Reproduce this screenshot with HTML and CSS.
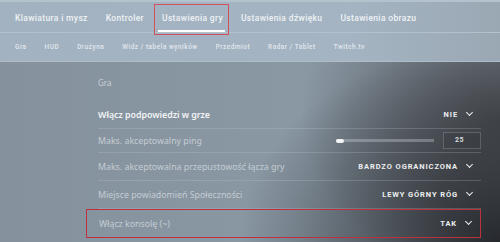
FILE: index.html
```html
<!DOCTYPE html>
<html lang="pl">
<head>
  <meta charset="UTF-8" />
  <title>Ustawienia gry</title>
  <link rel="stylesheet" href="styles.css">
</head>
<body>

  <!-- top tabs -->
  <div class="header">
    <div class="tabs">
      <span class="tab">Klawiatura i mysz</span>
      <span class="tab">Kontroler</span>
      <span class="tab active">Ustawienia gry</span>
      <span class="tab">Ustawienia dźwięku</span>
      <span class="tab">Ustawienia obrazu</span>
    </div>
    <div class="subtabs">
      <span>Gra</span>
      <span>HUD</span>
      <span>Drużyna</span>
      <span>Widz / tabela wyników</span>
      <span>Przedmiot</span>
      <span>Radar / Tablet</span>
      <span>Twitch.tv</span>
    </div>
  </div>

  <!-- settings list -->
  <div class="content">
    <div class="section">Gra</div>

    <div class="row bright">
      <span class="label">Włącz podpowiedzi w grze</span>
      <span class="value">NIE <i class="chev"></i></span>
    </div>

    <div class="row short">
      <span class="label">Maks. akceptowalny ping</span>
      <span class="slider"><span class="track"><span class="knob"></span></span><span class="num">25</span></span>
    </div>

    <div class="row">
      <span class="label">Maks. akceptowalna przepustowość łącza gry</span>
      <span class="value">BARDZO OGRANICZONA <i class="chev"></i></span>
    </div>

    <div class="row">
      <span class="label">Miejsce powiadomień Społeczności</span>
      <span class="value">LEWY GÓRNY RÓG <i class="chev"></i></span>
    </div>

    <div class="row marked">
      <span class="label">Włącz konsolę (~)</span>
      <span class="value">TAK <i class="chev"></i></span>
    </div>
  </div>

</body>
</html>
```

FILE: styles.css
```css
body {
  margin: 0;
  width: 500px;
  height: 242px;
  overflow: hidden;
  font-family: "Noto Sans", sans-serif;
  color: #e8edf1;
  background:
    radial-gradient(ellipse 260px 200px at 100% 100%, rgba(34,36,40,0.95), rgba(34,36,40,0) 100%),
    radial-gradient(ellipse 200px 160px at 500px 120px, rgba(60,60,64,0.7), rgba(60,60,64,0) 100%),
    linear-gradient(90deg, #85929d 0%, #8a98a4 60%, #7d8892 100%);
}

.header {
  height: 62px;
  box-sizing: border-box;
  padding-top: 3px;
  border-top: 2px solid #b4c2ce;
  border-bottom: 1px solid #aebccb;
  background: linear-gradient(90deg, #a2b2c0 0%, #a5b4c2 70%, #9aa8b4 100%);
}

.tabs {
  display: flex;
  gap: 18px;
  padding-left: 15px;
  height: 27px;
  border-bottom: 1px solid #b3c1cd;
}

.tab {
  position: relative;
  font-family: Roboto, sans-serif;
  font-weight: 500;
  font-size: 8.5px;
  letter-spacing: 0.35px;
  line-height: 26px;
  color: #eef2f5;
}

.tab.active::before {
  content: "";
  position: absolute;
  left: -8px;
  right: -6px;
  top: -1px;
  bottom: -3px;
  border: 1px solid #d0505c;
}

.tab.active::after {
  content: "";
  position: absolute;
  left: -4px;
  right: -2px;
  bottom: 0;
  height: 2px;
  background: #ffffff;
}

.subtabs {
  display: flex;
  gap: 18px;
  padding-left: 15px;
  height: 28px;
  align-items: center;
}

.subtabs span {
  font-family: Roboto, sans-serif;
  font-weight: 500;
  font-size: 6.4px;
  letter-spacing: 0.55px;
  color: #e2e8ee;
}

.content {
  padding: 14px 19px 0 98px;
}

.section {
  font-size: 8px;
  line-height: 14px;
  color: #c8d0d7;
  margin-bottom: 11px;
}

.row {
  height: 28px;
  display: flex;
  align-items: center;
  justify-content: space-between;
  padding-right: 9px;
  border-bottom: 1px solid rgba(200,210,220,0.22);
  box-sizing: border-box;
}

.row.short {
  height: 24px;
  padding-right: 0;
}

.label {
  font-size: 8.8px;
  color: #c4ccd3;
}

.bright .label {
  color: #f2f4f6;
  font-weight: 600;
}

.value {
  display: flex;
  align-items: center;
  gap: 9px;
  font-family: Roboto, sans-serif;
  font-weight: bold;
  font-size: 7.5px;
  letter-spacing: 0.9px;
  color: #eceef0;
}

.chev {
  width: 4px;
  height: 4px;
  border-right: 1.5px solid #eceef0;
  border-bottom: 1.5px solid #eceef0;
  transform: translateY(-2px) rotate(45deg);
}

.slider {
  display: flex;
  align-items: center;
  gap: 9px;
}

.track {
  width: 98px;
  height: 3px;
  background: rgba(210,216,222,0.35);
  display: flex;
  align-items: center;
}

.knob {
  width: 8px;
  height: 4px;
  border-radius: 2px;
  background: #f4f4f4;
}

.num {
  width: 38px;
  height: 17px;
  box-sizing: border-box;
  border: 1px solid rgba(200,205,210,0.25);
  background: rgba(0,0,0,0.06);
  font-family: Roboto, sans-serif;
  font-weight: bold;
  font-size: 7px;
  letter-spacing: 0.5px;
  line-height: 15px;
  padding-left: 11px;
  color: #d8dcdf;
}

.row.marked {
  margin-left: -12px;
  padding-left: 12px;
  height: 29px;
  border: 1px solid #c0303c;
}
```
